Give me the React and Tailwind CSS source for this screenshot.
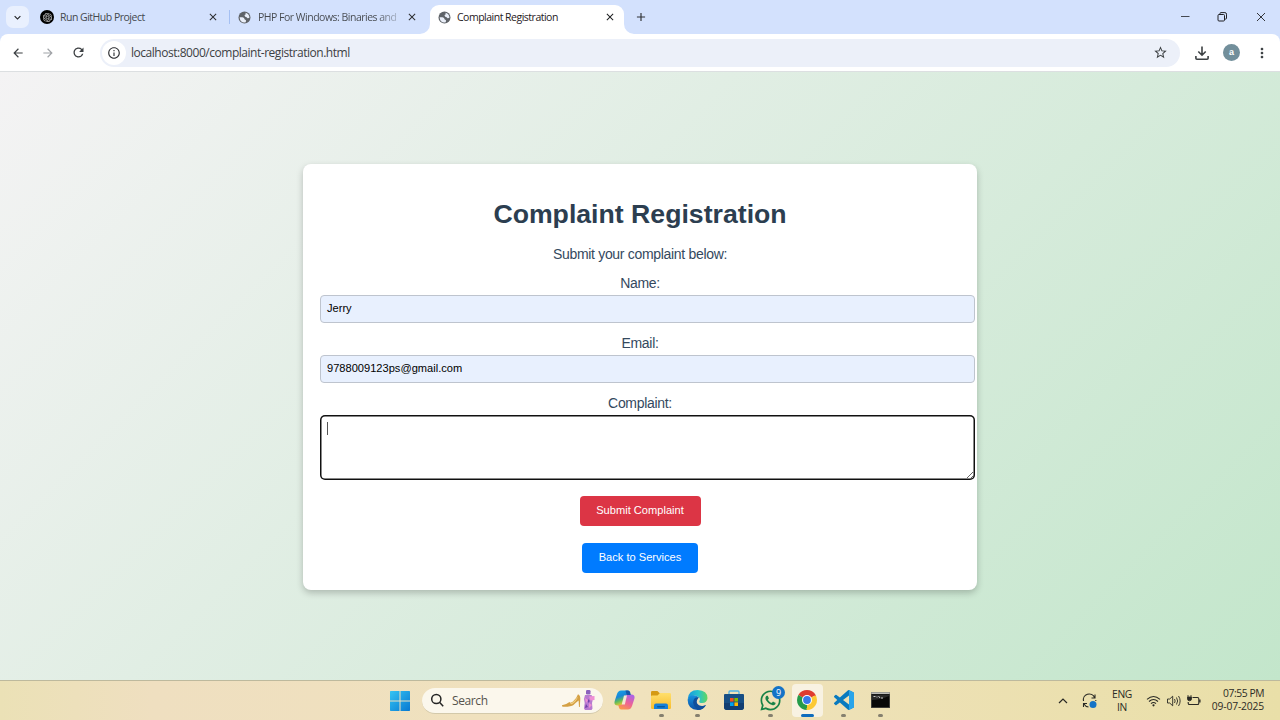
import React from "react";
import {
  MdArrowBack, MdArrowForward, MdRefresh, MdStarBorder, MdMoreVert, MdClose, MdAdd,
  MdKeyboardArrowDown, MdInfoOutline,
} from "react-icons/md";
import { RiOpenaiFill } from "react-icons/ri";
import { FaWhatsapp } from "react-icons/fa";

const ui = "font-['Open_Sans','Noto_Sans',sans-serif]";

function Globe({ className }) {
  return (
    <svg className={className} width="13" height="13" viewBox="0 0 13 13">
      <circle cx="6.500" cy="6.500" r="6" fill="#5f6368" />
      <path d="M7.600 1.700Q11.300 2.900 11.500 6.500Q10.800 7.400 9.500 7.200Q8.800 6 7.300 5.800L6.500 4.600Q6.600 3.700 7.600 3.600z" fill="#e9eef8" />
      <path d="M1.600 6.200H4.500Q6.600 6.700 6.500 8.200L8 9.200L7.800 11.300Q2.200 12.200 1.600 6.200z" fill="#e9eef8" />
    </svg>
  );
}

function Tabs() {
  return (
    <div className="flex h-[34px] items-center bg-[#d3e1fd] text-[#45494e]">
      <div className="ml-[6px] flex h-[22px] w-[23px] items-center justify-center rounded-[7px] bg-[#e9f0fe] text-[#1f2023]">
        <MdKeyboardArrowDown size={13} />
      </div>
      <div className="ml-[11px] flex h-[14px] w-[14px] items-center justify-center rounded-full bg-black text-[#d8d8d8]">
        <RiOpenaiFill size={11} />
      </div>
      <div className="ml-[6px] w-[147px] whitespace-nowrap pt-px text-[10.5px] tracking-[-0.5px]">Run GitHub Project</div>
      <MdClose size={12} className="text-[#2c2e31]" />
      <div className="ml-[10px] h-[14px] w-px bg-[#a5c0f3]" />
      <Globe className="ml-[8px]" />
      <div className="ml-[7px] w-[139px] whitespace-nowrap bg-linear-to-r from-[#45494e] from-85% to-[#45494e]/30 bg-clip-text pt-px text-[10.5px] tracking-[-0.5px] text-transparent">
        PHP For Windows: Binaries and
      </div>
      <MdClose size={12} className="ml-[9px] text-[#2c2e31]" />
      <div className="ml-[2px] flex h-[34px] w-[214px] shrink-0 items-end">
        <svg width="10" height="10" viewBox="0 0 10 10" className="shrink-0"><path d="M10 0A10 10 0 0 1 0 10H10Z" fill="#fff" /></svg>
        <div className="flex h-[29px] w-[194px] items-center rounded-t-[9px] bg-white pb-[5px] pl-[8px] text-[#1f2023]">
          <Globe />
          <div className="ml-[6px] w-[147px] whitespace-nowrap pt-px text-[10.5px] tracking-[-0.5px]">Complaint Registration</div>
          <MdClose size={12} />
        </div>
        <svg width="10" height="10" viewBox="0 0 10 10" className="shrink-0"><path d="M0 0A10 10 0 0 0 10 10H0Z" fill="#fff" /></svg>
      </div>
      <MdAdd size={14} className="text-[#303236]" />
      <svg className="ml-auto mr-[14px]" width="86" height="12" viewBox="0 0 86 12" fill="none" stroke="#202124">
        <path d="M1 5.500h8.500" strokeWidth=".8" />
        <path d="M39 3.500h4.500a1 1 0 0 1 1 1V9a1 1 0 0 1-1 1H39a1 1 0 0 1-1-1V4.500a1 1 0 0 1 1-1zM40 3.500V2.500q0-.9.9-.9h4q1.600 0 1.600 1.600v4q0 .9-.9.900h-1" />
        <path d="M77 2l8 8M85 2l-8 8" strokeWidth=".9" />
      </svg>
    </div>
  );
}

function Toolbar() {
  return (
    <div className="h-[38px] bg-[#d3e1fd]">
      <div className="flex h-[38px] items-center rounded-t-[8px] border-b border-[#dcdfe1] bg-white text-[#3c4043]">
        <MdArrowBack size={14} className="ml-[11px]" />
        <MdArrowForward size={14} className="ml-[16px] text-[#a0a3a7]" />
        <MdRefresh size={15} className="ml-[16px]" />
        <div className="ml-[14px] flex h-[28px] w-[1080px] items-center rounded-full bg-[#ecf0f9]">
          <div className="ml-[2px] flex h-[24px] w-[24px] items-center justify-center rounded-full bg-white">
            <MdInfoOutline size={14} className="text-[#303236]" />
          </div>
          <div className="ml-[5px] whitespace-nowrap pt-px text-[12px] tracking-[-0.47px] text-[#3c4043]">localhost:8000/complaint-registration.html</div>
          <MdStarBorder size={15} className="ml-auto mr-[12px]" />
        </div>
        <svg className="ml-[15px]" width="14" height="14" viewBox="0 0 14 14" fill="none" stroke="#3c4043" strokeWidth="1.600">
          <path d="M7 .5v8.500M3.300 5.500L7 9.200l3.700-3.700M.9 10v2.200q0 1 1 1h10.200q1 0 1-1V10" />
        </svg>
        <div className="ml-[14px] flex h-[17px] w-[17px] items-center justify-center rounded-full bg-[#728f9b] font-['Liberation_Sans',sans-serif] text-[9px] font-bold leading-none text-white">a</div>
        <MdMoreVert size={16} className="ml-[14px]" />
      </div>
    </div>
  );
}

function Field({ label, value }) {
  return (
    <>
      <label className="block h-[20px] text-center text-[14px] leading-[20px] tracking-[-0.31px]">{label}</label>
      <div className="mb-[10px] mr-[-15px] mt-[2px] flex h-[28px] items-center rounded-[4px] border border-[#bec4ce] bg-[#e8f0fe] pb-[2px] pl-[6px] text-[11.1px] text-black">{value}</div>
    </>
  );
}

function Page() {
  return (
    <div className="flex h-[608px] justify-center bg-[linear-gradient(135deg,#f4f3f4,#c3e6cb)] pt-[92px] font-['Liberation_Sans',Arial,sans-serif] text-[#34495e]">
      <div className="h-[426px] w-[674px] rounded-[8px] bg-white px-[17px] pt-[33px] shadow-[0_3px_7px_rgba(0,0,0,0.22)]">
        <h1 className="h-[34px] text-center text-[26.67px] font-bold leading-[34px] text-[#2c3e50]">Complaint Registration</h1>
        <p className="mb-[9px] mt-[13px] h-[20px] text-center text-[14px] leading-[20px] tracking-[-0.31px]">Submit your complaint below:</p>
        <Field label="Name:" value="Jerry" />
        <Field label="Email:" value="9788009123ps@gmail.com" />
        <label className="block h-[20px] text-center text-[14px] leading-[20px] tracking-[-0.31px]">Complaint:</label>
        <div className="mr-[-15px] mt-[2px] flex h-[65px] justify-between rounded-[5px] pb-px pl-[7px] pr-px pt-[7px] shadow-[inset_0_0_0_1.5px_#101010]">
          <div className="h-[13px] w-px bg-[#555]" />
          <svg className="self-end" width="8" height="8" viewBox="0 0 8 8" stroke="#555" strokeWidth=".9"><path d="M1 7l6-6M4.500 7.500L7.500 4.500" /></svg>
        </div>
        <div className="mt-[16px] flex flex-col items-center gap-[17px] text-[11.1px] text-white">
          <button className="h-[30px] w-[121px] whitespace-nowrap rounded-[4px] bg-[#dc3545] pb-px">Submit Complaint</button>
          <button className="h-[30px] w-[116px] whitespace-nowrap rounded-[4px] bg-[#007bff] pb-px">Back to Services</button>
        </div>
      </div>
    </div>
  );
}

function TaskIcon({ children, mark, active }) {
  return (
    <div className={active ? "flex h-[33px] w-[31px] flex-col items-center rounded-[4px] bg-[#f8f2e2]" : "flex h-[33px] w-[31px] flex-col items-center"}>
      <div className="flex h-[30px] items-center pt-[2px]">{children}</div>
      {mark && <div className={active ? "h-[3px] w-[13px] shrink-0 rounded-full bg-[#0f6cbd]" : "h-[2.500px] w-[5px] shrink-0 rounded-full bg-[#85806f]"} />}
    </div>
  );
}

function Taskbar() {
  return (
    <div className="flex h-[40px] items-center border-t border-[#bdb99d] bg-[linear-gradient(90deg,#ebe1b6,#efdfc0_12%,#f0e2bd_50%,#e9dfa8)] text-[#2c2b26]">
      <svg className="ml-[390px]" width="20" height="20" viewBox="0 0 20 20">
        <defs><linearGradient id="win" x2="1" y2="1" gradientUnits="objectBoundingBox"><stop stopColor="#35c4f3" /><stop offset="1" stopColor="#0878d1" /></linearGradient></defs>
        <path d="M0 .7Q0 0 .7 0H9.500V9.500H0zM10.500 0h8.800q.7 0 .7.7v8.800h-9.500zM0 10.500h9.500V20H.7Q0 20 0 19.300zM10.500 10.500H20v8.800q0 .7-.7.7h-8.800z" fill="url(#win)" />
      </svg>
      <div className="ml-[12px] flex h-[26px] w-[181px] items-center rounded-full border-b border-[#d3c9aa] bg-[#fbf7ec]">
        <svg className="ml-[8px]" width="14" height="14" viewBox="0 0 14 14" fill="none" stroke="#252525" strokeWidth="1.500"><circle cx="6.300" cy="6" r="4.600" /><path d="M9.500 9.300l3.700 3.900" /></svg>
        <div className="ml-[8px] pt-px text-[12px] tracking-[-0.4px] text-[#55534d]">Search</div>
        <svg className="ml-auto mr-[8px]" width="34" height="20" viewBox="0 0 34 20">
          <path d="M1 15.200Q5.500 14.500 8.500 12Q9.500 13.500 12 11.500Q15.500 8.500 17 4.200Q19.500 5.500 19.300 9L18.800 17H18L17.600 10.500Q15 12.500 12.500 15Q10 17 2 16.800Q.5 16.300 1 15.200z" fill="#d4a044" />
          <path d="M9 13.500Q13 12.500 16.800 6.500Q16.500 10 12 13.500Q10 14.800 9 13.500z" fill="#f1cf83" />
          <rect x="25" y="0" width="4.500" height="4.500" rx="1.200" fill="#8b62bd" />
          <path d="M24 5h6.500l1 2v4l-.5 2 .5 5.500-1 1.500h-6.500L23 18.500l.7-5.500-.7-4z" fill="#b77bd0" />
          <path d="M24 8l3 2-2 3zM28 13l3 2-3 3zM28 6.500l5.500-.5v4l-4 .5z" fill="#ee8fd4" />
          <path d="M25 14l2 3-3 1zM27 9l2 2-2 2z" fill="#7141a8" />
        </svg>
      </div>
      <div className="ml-[6px] flex gap-[5.500px]">
        <TaskIcon>
          <svg width="21" height="20" viewBox="0 0 21 20">
            <defs>
              <linearGradient id="cpa" x1="0" y1="0" x2=".4" y2="1"><stop stopColor="#13a7e9" /><stop offset=".45" stopColor="#1b86d8" /><stop offset=".7" stopColor="#5fbb5c" /><stop offset="1" stopColor="#f5c928" /></linearGradient>
              <linearGradient id="cpb" x1=".7" y1="0" x2=".2" y2="1"><stop stopColor="#ad62e6" /><stop offset=".5" stopColor="#ed6297" /><stop offset="1" stopColor="#fb9b45" /></linearGradient>
            </defs>
            <path d="M7 .5h7q1.500 0 2 1.700L16.700 5h-2Q12.500 5 12 7l-1.900 6.500Q9.500 15.500 7.500 15.500h-4Q-.4 15.500.7 11L3 4Q4.200.5 7 .5z" fill="url(#cpa)" />
            <path d="M14 19.500H7q-1.500 0-2-1.700L4.300 15h2q2.200 0 2.700-2l1.900-6.500q.6-2 2.600-2h4q3.900 0 2.800 4.500L18 16q-1.200 3.500-4 3.500z" fill="url(#cpb)" />
            <path d="M10 5.500h3L10.800 14.500H7.700z" fill="#f3e8d4" /><path d="M11.500.5H14q1.500 0 2 1.700l.7 2.800h-4z" fill="#1757a9" />
          </svg>
        </TaskIcon>
        <TaskIcon mark>
          <svg width="20" height="18" viewBox="0 0 20 18">
            <defs><linearGradient id="fld" x2="0" y2="1"><stop stopColor="#ffdf6c" /><stop offset="1" stopColor="#f8bd2d" /></linearGradient></defs>
            <path d="M0 1.200Q0 0 1.200 0h5.200L9 2.500V6H0z" fill="#d59a13" />
            <path d="M0 5.500Q0 4.500 1 4.500h5.500L9 2h9.800Q20 2 20 3.200v13.600Q20 18 18.800 18H1.200Q0 18 0 16.800z" fill="url(#fld)" />
            <path d="M3 18v-3.500Q3 12.500 5 12.500h10q2 0 2 2V18z" fill="#1680d8" /><rect x="6" y="15" width="8" height="1.500" rx=".7" fill="#075a9e" />
          </svg>
        </TaskIcon>
        <TaskIcon mark>
          <svg width="21" height="20" viewBox="0 0 20 20">
            <defs>
              <linearGradient id="eda" x1="0" x2="1"><stop stopColor="#1997dd" /><stop offset=".55" stopColor="#27c5cb" /><stop offset="1" stopColor="#63d65c" /></linearGradient>
              <linearGradient id="edb" x2="0" y2="1"><stop stopColor="#1691df" /><stop offset="1" stopColor="#0c50a4" /></linearGradient>
            </defs>
            <path d="M.2 9Q1 0 10.200 0Q20 .3 20 8.300Q19.500 13 14.700 13Q11 13 11.800 11.200Q13 9.500 12 7.800Q9 4.300 4.500 6Q1.500 7.200.2 9z" fill="url(#eda)" />
            <path d="M.1 9.700Q1.500 5.300 6 5.300Q9.500 5.300 11.400 7.200Q7 7.500 7 11.500Q8 17.500 14.500 16.300Q17 15.700 18.400 14.900Q16 19.800 10.200 20Q.3 19.500.1 9.700z" fill="url(#edb)" />
            <path d="M11.400 7.200Q6 6.500 5.600 12.500Q6.500 18.500 11.500 19.900Q16.500 19 18.500 14.900Q15 17 11.500 15.300Q7 12.500 11.400 7.200z" fill="#104f9c" />
          </svg>
        </TaskIcon>
        <TaskIcon>
          <svg width="20" height="20" viewBox="0 0 20 20">
            <path d="M5 5V2q0-1 1-1h8q1 0 1 1v3" fill="none" stroke="#53b4e6" strokeWidth="1.300" />
            <path d="M0 5q0-1 1-1h18q1 0 1 1v12q0 3-3 3H3q-3 0-3-3z" fill="#174e85" /><path d="M0 13h20v4q0 3-3 3H3q-3 0-3-3z" fill="#123e72" />
            <path d="M6 8h3.600v3.600H6z" fill="#f25022" /><path d="M10.400 8H14v3.600h-3.600z" fill="#7fba00" /><path d="M6 12.400h3.600V16H6z" fill="#00a4ef" /><path d="M10.400 12.400H14V16h-3.600z" fill="#ffb900" />
          </svg>
        </TaskIcon>
        <TaskIcon mark>
          <div className="relative text-[#188247]">
            <FaWhatsapp size={23} />
            <div className="absolute right-[-3px] top-[-3px] flex h-[13px] w-[13px] items-center justify-center rounded-full bg-[#1473c7] text-[9px] leading-none text-white">9</div>
          </div>
        </TaskIcon>
        <TaskIcon mark active>
          <svg width="20" height="20" viewBox="0 0 20 20">
            <path d="M10 10L1.340 5A10 10 0 0 1 18.660 5z" fill="#df3c2e" />
            <path d="M10 10L18.660 5A10 10 0 0 1 10 20z" fill="#fcc934" />
            <path d="M10 10V20A10 10 0 0 1 1.340 5z" fill="#259b4a" />
            <path d="M10 5.400h8.900L18.660 5H10z" fill="#df3c2e" /><path d="M14 12.300L10 20l-.8-1 3.500-6z" fill="#fcc934" />
            <circle cx="10" cy="10" r="5" fill="#fff" /><circle cx="10" cy="10" r="3.900" fill="#3879ea" />
          </svg>
        </TaskIcon>
        <TaskIcon mark>
          <svg width="20" height="20" viewBox="0 0 24 24">
            <path d="M23.150 2.587L18.210.21a1.494 1.494 0 0 0-1.705.29l-9.460 8.630-4.120-3.128a.999.999 0 0 0-1.276.057L.327 7.261A1 1 0 0 0 .326 8.740L3.899 12 .326 15.260a1 1 0 0 0 .001 1.479L1.650 17.940a.999.999 0 0 0 1.276.057l4.120-3.128 9.460 8.630a1.492 1.492 0 0 0 1.704.29l4.942-2.377A1.500 1.500 0 0 0 24 20.060V3.939a1.500 1.500 0 0 0-.85-1.352zm-5.146 14.861L10.826 12l7.178-5.448v10.896z" fill="#087abf" />
            <path d="M18 .1l5.150 2.487Q24 3 24 3.939V20.060q0 .95-.85 1.353L18 23.900z" fill="#29a4ea" />
          </svg>
        </TaskIcon>
        <TaskIcon mark>
          <svg width="19" height="16" viewBox="0 0 19 16">
            <path d="M0 0h19v16H0z" fill="#080808" /><path d="M0 0h19v2H0z" fill="#bcbcb8" /><path d="M1 8Q9 8 18 4V2.500H1z" fill="#282828" />
            <path d="M2.500 4.500h2M6 4.500v1M7.500 4l1.500 2M10 6h2" stroke="#ddd" strokeWidth=".9" /><path d="M.3.3h18.400v15.400H.3z" fill="none" stroke="#77756d" strokeWidth=".6" />
          </svg>
        </TaskIcon>
      </div>
      <svg className="ml-auto" width="10" height="7" viewBox="0 0 10 7" fill="none" stroke="#292924" strokeWidth="1.200"><path d="M1 6l4-4 4 4" /></svg>
      <svg className="ml-[14px]" width="16" height="16" viewBox="0 0 16 16" fill="none" stroke="#292924" strokeWidth="1.100">
        <path d="M1.500 8A5.800 5.800 0 0 1 12.500 4.500M13 1.500v3.500H9.500M13.800 7v1M1.500 14v-3.500H5M2 11a5.800 5.800 0 0 0 4.500 3" /><circle cx="11" cy="11.500" r="3.500" fill="#1473c7" stroke="none" />
      </svg>
      <div className="ml-[13px] w-[22px] text-center text-[10.300px] leading-[13px] tracking-[-0.4px]">ENG<br />IN</div>
      <svg className="ml-[13px]" width="56" height="14" viewBox="0 0 56 14" fill="none" stroke="#292924" strokeWidth="1.100">
        <path d="M1 5.300Q7.500-.2 14 5.300M3 7.500q4.500-4 9 0M5 9.600q2.500-2.200 5 0" /><circle cx="7.500" cy="11.300" r="1.100" fill="#292924" stroke="none" />
        <path d="M21.500 5h2.200l3-2.800v9.600l-3-2.800h-2.200zM28.500 5q1.300 2 0 4M30.500 3.500q2.300 3.500 0 7M32.500 2q3.300 5 0 10" strokeWidth=".9" />
        <path d="M46.500 3.500h5q1.300 0 1.300 1.300v4.400q0 1.300-1.300 1.300h-8q-1.300 0-1.300-1.300V8M54 5.500v3" /><path d="M42 1v2M45 1v2M41.500 3h4v2q0 1.800-2 1.800t-2-1.800z" fill="#292924" strokeWidth=".8" />
      </svg>
      <div className="mb-px ml-[8px] mr-[16px] flex w-[54px] flex-col items-end whitespace-nowrap text-[10.300px] leading-[13px]">
        <span className="tracking-[-0.43px]">07:55 PM</span>
        <span className="tracking-[-0.15px]">09-07-2025</span>
      </div>
    </div>
  );
}

export default function App() {
  return (
    <div className={`h-[720px] w-[1280px] overflow-hidden ${ui}`}>
      <Tabs />
      <Toolbar />
      <Page />
      <Taskbar />
    </div>
  );
}
